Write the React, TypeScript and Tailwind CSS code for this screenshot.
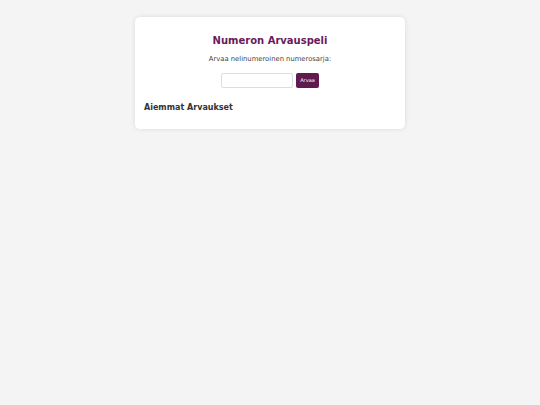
import React from "react";

export default function App() {
  return (
    <div className="min-h-[405px] w-full bg-[#f4f4f4] pt-[17px]" style={{ fontFamily: '"DejaVu Sans", sans-serif' }}>
      <div className="mx-auto w-[270px] rounded-[5px] bg-white px-[9px] pb-[16px] pt-[18px] shadow-[0_0_5px_rgba(0,0,0,0.1)]">
        <h1 className="text-center text-[10px] font-bold leading-[12px] text-[#6a1b5c]">Numeron Arvauspeli</h1>
        <p className="mt-[8px] text-center text-[6.8px] leading-[9px] text-[#444]">Arvaa nelinumeroinen numerosarja:</p>
        <div className="mt-[9px] flex items-center justify-center gap-[3px]">
          <input className="h-[15px] w-[72px] rounded-[2px] border border-[#ddd] bg-white px-1 text-[7px] outline-none" />
          <button className="h-[15px] w-[23px] rounded-[2px] bg-[#5f1a4f] text-[5px] text-white">Arvaa</button>
        </div>
        <h2 className="mt-[15px] text-[8px] font-bold leading-[10px] text-[#333]">Aiemmat Arvaukset</h2>
      </div>
    </div>
  );
}
